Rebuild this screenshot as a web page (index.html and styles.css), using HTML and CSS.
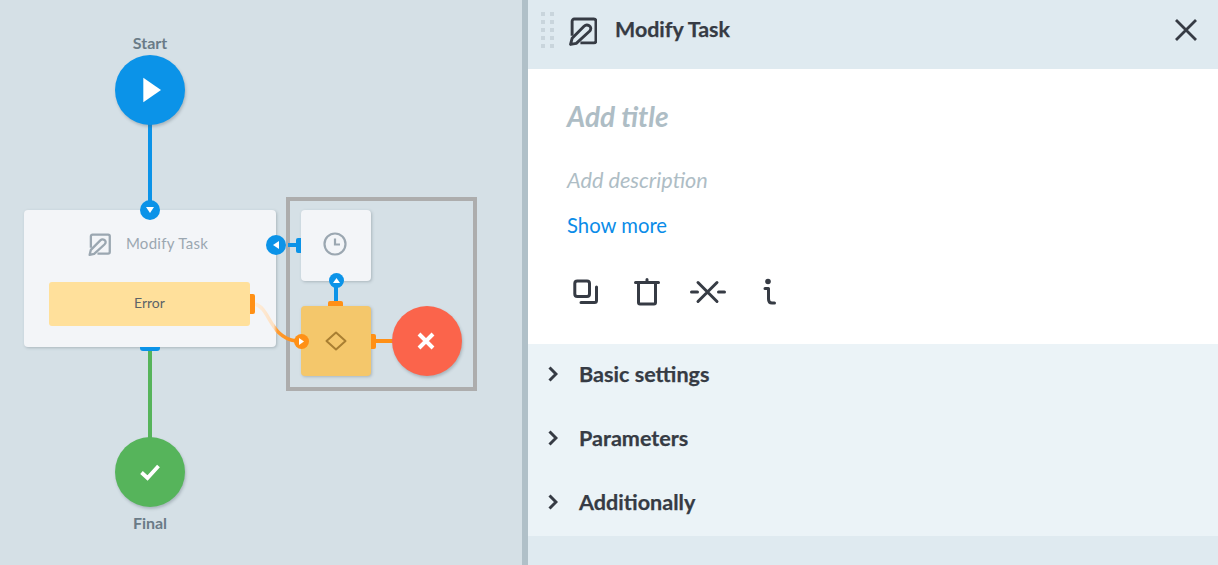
FILE: index.html
```html
<!DOCTYPE html>
<html lang="en">
<head>
<meta charset="utf-8">
<title>Modify Task</title>
<link rel="stylesheet" href="styles.css">
</head>
<body>
<div class="page">
  <main class="canvas">
    <svg class="wires" width="521" height="565" viewBox="0 0 521 565">
      <defs>
        <linearGradient id="errwire" gradientUnits="userSpaceOnUse" x1="255" y1="0" x2="296" y2="0">
          <stop offset="0" stop-color="#fdeedd"/>
          <stop offset="0.46" stop-color="#fde0c2"/>
          <stop offset="0.54" stop-color="#ff9a30"/>
          <stop offset="1" stop-color="#ff9016"/>
        </linearGradient>
      </defs>
      <rect class="w-blue" x="148" y="124" width="4" height="82"/>
      <rect class="w-green" x="148" y="350" width="4" height="88"/>
      <rect class="w-blue" x="288" y="243" width="9" height="4"/>
      <rect class="w-blue" x="334" y="287" width="4" height="16"/>
      <rect class="w-orange" x="375" y="339" width="18" height="4"/>
      <path d="M255 304C270 308 270 338 296 341" fill="none" stroke="url(#errwire)" stroke-width="3.5"/>
    </svg>

    <div class="frame"></div>

    <div class="label label-start">Start</div>
    <div class="round round-start">
      <svg width="20" height="26" viewBox="0 0 20 26"><path d="M1.3 0.7 19 13 1.3 25.3z" fill="#fff"/></svg>
    </div>
    <span class="port port-in"><svg width="8" height="6" viewBox="0 0 8 6"><path d="M0 0h8L4 6z" fill="#fff"/></svg></span>

    <section class="card card-task">
      <div class="task-head">
        <svg width="23" height="23" viewBox="0 0 27 28" fill="none" stroke="#9ba7b1" stroke-width="2.800" stroke-linejoin="round"><path d="M3 18V4a2 2 0 0 1 2-2h19a2 2 0 0 1 2 2v19a2 2 0 0 1-2 2H11"/><path d="M1.500 26.500l5.500-1L19.500 14c2.500-2.500 1.500-4.500 0-5.500s-3.500-1-5 .5L3 20.500z"/></svg>
        <span class="task-name">Modify Task</span>
      </div>
      <div class="error-row">Error</div>
    </section>
    <span class="tab tab-error"></span>
    <span class="tab tab-task-bottom"></span>

    <div class="round round-final">
      <svg width="22" height="18" viewBox="0 0 22 18"><path d="M2.500 9.500 8.500 15 19.500 3" fill="none" stroke="#fff" stroke-width="3.800"/></svg>
    </div>
    <div class="label label-final">Final</div>

    <span class="port port-left"><svg width="6" height="8" viewBox="0 0 6 8"><path d="M6 0v8L0 4z" fill="#fff"/></svg></span>
    <span class="tab tab-timer"></span>
    <section class="card card-timer">
      <svg width="24" height="24" viewBox="0 0 24 24" fill="none" stroke="#9ba7b1"><circle cx="12" cy="12" r="10.500" stroke-width="2.200"/><path d="M12 6.500V12.500H17" stroke-width="2.200"/></svg>
    </section>
    <span class="port port-small port-up"><svg width="7" height="5" viewBox="0 0 7 5"><path d="M0 5h7L3.500 0z" fill="#fff"/></svg></span>
    <span class="tab tab-gate-top"></span>
    <section class="card card-gate">
      <svg width="22" height="20" viewBox="0 0 22 20" fill="none" stroke="#a97f32" stroke-width="2" stroke-linejoin="round"><path d="M11 1.500 20.500 10 11 18.500 1.500 10z"/></svg>
    </section>
    <span class="port port-small port-gate"><svg width="5" height="7" viewBox="0 0 5 7"><path d="M0 0v7l5-3.500z" fill="#fff"/></svg></span>
    <span class="tab tab-gate-right"></span>
    <div class="round round-cancel">
      <svg width="20" height="20" viewBox="0 0 20 20"><path d="M3 3 17 17M17 3 3 17" fill="none" stroke="#fff" stroke-width="4"/></svg>
    </div>
  </main>

  <div class="divider"></div>

  <aside class="panel">
    <header class="panel-head">
      <div class="grip"><i></i><i></i><i></i><i></i><i></i><i></i><i></i><i></i><i></i><i></i></div>
      <svg class="head-icon" width="28" height="29" viewBox="0 0 27 28" fill="none" stroke="#363b44" stroke-width="2.800" stroke-linejoin="round"><path d="M3 18V4a2 2 0 0 1 2-2h19a2 2 0 0 1 2 2v19a2 2 0 0 1-2 2H11"/><path d="M1.500 26.500l5.500-1L19.500 14c2.500-2.500 1.500-4.500 0-5.500s-3.500-1-5 .5L3 20.500z"/></svg>
      <h1 class="head-title">Modify Task</h1>
      <svg class="head-close" width="24" height="24" viewBox="0 0 24 24"><path d="M2 2 22 22M22 2 2 22" fill="none" stroke="#363b44" stroke-width="2.800"/></svg>
    </header>

    <div class="panel-body">
      <div class="add-title">Add title</div>
      <div class="add-desc">Add description</div>
      <a class="show-more">Show more</a>
      <div class="tools">
        <svg width="38" height="30" viewBox="0 0 38 30" fill="none" stroke="#363b44" stroke-width="3" stroke-linecap="round" stroke-linejoin="round"><rect x="7.800" y="4" width="14.700" height="15.500" rx="2.500"/><path d="M29.500 10V23.500a2 2 0 0 1-2 2H14"/></svg>
        <svg width="38" height="30" viewBox="0 0 38 30" fill="none" stroke="#363b44" stroke-width="3" stroke-linecap="round" stroke-linejoin="round"><path d="M7.500 5.500H30.500M19 2.500V5.500M10.500 5.500V25.500a1.500 1.500 0 0 0 1.500 1.500H26a1.500 1.500 0 0 0 1.500-1.500V5.500"/></svg>
        <svg width="38" height="30" viewBox="0 0 38 30" fill="none" stroke="#363b44" stroke-width="3" stroke-linecap="round"><path d="M9 5.500 28 24.500M28 5.500 9 24.500M2.500 15H8.500M29.500 15H35.500"/></svg>
        <svg width="38" height="30" viewBox="0 0 38 30" fill="none" stroke="#363b44" stroke-width="3" stroke-linecap="round" stroke-linejoin="round"><circle cx="18" cy="4.500" r="2.800" fill="#363b44" stroke="none"/><path d="M15 11.500H18.500V22Q18.500 26 22 26H24.500"/></svg>
      </div>
    </div>

    <div class="sections">
      <div class="section"><svg width="10" height="16" viewBox="0 0 10 16"><path d="M1.500 1.500 8 8 1.500 14.500" fill="none" stroke="#363b44" stroke-width="3"/></svg><span>Basic settings</span></div>
      <div class="section"><svg width="10" height="16" viewBox="0 0 10 16"><path d="M1.500 1.500 8 8 1.500 14.500" fill="none" stroke="#363b44" stroke-width="3"/></svg><span>Parameters</span></div>
      <div class="section"><svg width="10" height="16" viewBox="0 0 10 16"><path d="M1.500 1.500 8 8 1.500 14.500" fill="none" stroke="#363b44" stroke-width="3"/></svg><span>Additionally</span></div>
    </div>
    <div class="panel-foot"></div>
  </aside>
</div>
</body>
</html>
```
FILE: styles.css
```css
* { box-sizing: border-box; }
html, body { margin: 0; height: 100%; overflow: hidden; }
body { font-family: "Lato", "Noto Sans", sans-serif; color: #363b44; background: #d5e0e6; }

.page { display: flex; width: 1218px; height: 565px; }

/* free canvas: the nodes of the diagram */
.canvas { position: relative; width: 522px; flex: none; background: #d5e0e6; }
.wires { position: absolute; left: 0; top: 0; z-index: 1; }
.w-blue { fill: #0b93e8; }
.w-green { fill: #56b45b; }
.w-orange { fill: #ff9016; }

.frame { position: absolute; left: 285.500px; top: 197px; width: 191.500px; height: 194px; border: 4px solid #adadad; }

.label { position: absolute; width: 80px; left: 110px; text-align: center; font-size: 16px; font-weight: 700; line-height: 18px; color: #6a7b87; }
.label-start { top: 34px; }
.label-final { top: 514px; }

.round { position: absolute; width: 70px; height: 70px; border-radius: 50%; display: flex; align-items: center; justify-content: center; box-shadow: 1px 2px 3px rgba(70, 85, 95, .3); z-index: 2; }
.round-start { left: 115px; top: 55px; background: #0b93e8; }
.round-start svg { margin-left: 3px; }
.round-final { left: 115px; top: 437px; background: #56b45b; }
.round-cancel { left: 392px; top: 306px; background: #fb644b; }
.round-cancel svg { margin-right: 2px; }

.card { position: absolute; border-radius: 4px; background: #f3f5f8; box-shadow: 1px 1px 3px rgba(70, 85, 95, .3); display: flex; align-items: center; justify-content: center; }
.card-task { left: 24px; top: 210px; width: 252px; height: 137px; display: block; padding: 23px 25px 0; }
.task-head { display: flex; align-items: center; justify-content: center; gap: 15px; height: 22px; margin-right: 4px; }
.task-name { font-size: 15px; color: #9ba7b1; letter-spacing: .3px; position: relative; top: -1px; }
.error-row { margin-top: 27px; height: 44px; width: 201px; border-radius: 3px; background: #ffe09b; font-size: 14px; line-height: 42px; text-align: center; color: #5d6468; }
.card-timer { left: 301px; top: 210px; width: 70px; height: 71px; }
.card-timer svg { margin-right: 3px; margin-top: -3px; }
.card-gate { left: 301px; top: 306px; width: 70px; height: 70px; background: #f4c76b; }
.card-gate svg { margin-right: 1px; }

.port { position: absolute; width: 20px; height: 20px; border-radius: 50%; background: #0b93e8; display: flex; align-items: center; justify-content: center; z-index: 3; }
.port-in { left: 140px; top: 200px; }
.port-left { left: 265.500px; top: 235px; }
.port-small { width: 15px; height: 15px; }
.port-up { left: 328.500px; top: 273px; }
.port-gate { left: 293.500px; top: 333.500px; background: #ff9016; }

.tab { position: absolute; background: #ff9016; z-index: 2; }
.tab-error { left: 250px; top: 294px; width: 5px; height: 20px; border-radius: 0 2px 2px 0; }
.tab-task-bottom { left: 140px; top: 347px; width: 20px; height: 4px; background: #0b93e8; border-radius: 0 0 3px 3px; }
.tab-timer { left: 296px; top: 238px; width: 5px; height: 15px; background: #0b93e8; border-radius: 2px 0 0 2px; }
.tab-gate-top { left: 328px; top: 301px; width: 15px; height: 5px; border-radius: 2px 2px 0 0; }
.tab-gate-right { left: 371px; top: 333.500px; width: 5px; height: 15px; border-radius: 0 2px 2px 0; }

.divider { width: 6px; flex: none; background: #b0c0c8; }

.panel { flex: 1; display: flex; flex-direction: column; background: #dfeaf0; }
.panel-head { height: 69px; flex: none; display: flex; align-items: center; padding: 0 0 11px 13px; background: #dfeaf0; }
.grip { display: grid; grid-template-columns: 4px 4px; gap: 4px; width: 13px; column-gap: 4.500px; margin-top: 1px; }
.grip i { display: block; width: 4px; height: 4px; background: #c9d5dc; }
.head-icon { margin-left: 15px; margin-top: 4px; }
.head-title { margin: 0 0 0 18px; font-size: 21.400px; font-weight: 700; line-height: 28px; color: #363b44; -webkit-text-stroke: .25px #363b44; }
.head-close { margin-left: auto; margin-right: 20px; margin-top: 2px; }

.panel-body { flex: none; height: 275px; padding: 29px 0 0 39px; background: #fff; }
.add-title { font-size: 28px; font-weight: 700; font-style: italic; line-height: 36px; color: #aebdc5; }
.add-desc { margin-top: 28px; font-size: 21.700px; font-style: italic; line-height: 36px; color: #aebdc5; }
.show-more { display: block; margin-top: 13px; font-size: 20.300px; line-height: 28px; color: #0a8ce8; }
.tools { display: flex; gap: 23px; margin-top: 38px; }

.sections { flex: none; display: flex; flex-direction: column; gap: 4px; padding-bottom: 4px; background: #ebf3f7; }
.section { height: 60px; display: flex; align-items: center; padding-left: 21px; gap: 20px; }
.section svg { margin-left: -1px; }
.section span { font-size: 21.600px; font-weight: 700; color: #363b44; margin-top: -1px; margin-left: 1px; -webkit-text-stroke: .25px #363b44; }
.panel-foot { flex: 1; background: #dfeaf0; }
```
